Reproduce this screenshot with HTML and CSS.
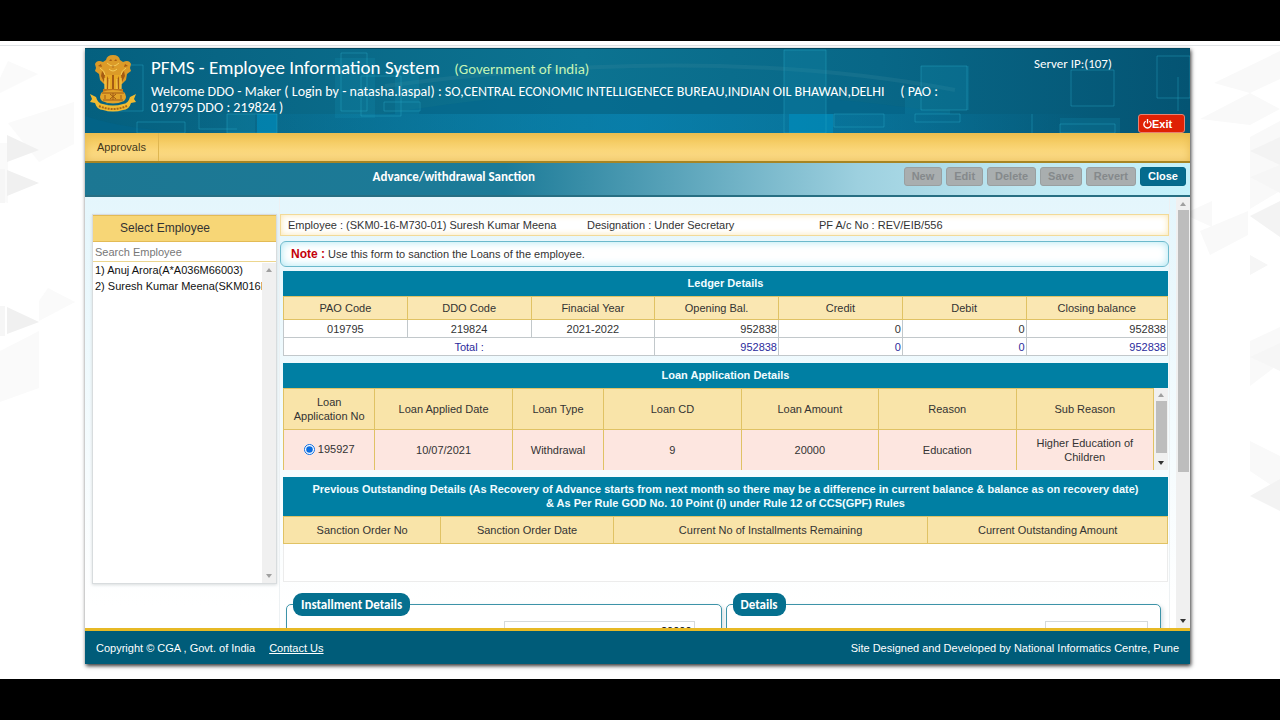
FILE: index.html
```html
<!DOCTYPE html>
<html lang="en">
<head>
<meta charset="utf-8">
<title>PFMS - Employee Information System</title>
<link rel="stylesheet" href="styles.css">
</head>
<body>
<div class="page">
  <svg class="page-art page-art-left" viewBox="0 0 85 638" preserveAspectRatio="xMinYMin meet" aria-hidden="true">
    <path fill="#fafafa" d="M0 37 8 20 38 33 0 52zM8 82 74 61 74 103 39 121zM0 102h8v60L0 160zM39 260 48 247 75 261 39 280zM0 310 39 290 39 347 0 361z"/>
    <path fill="#f0f0f0" d="M7 94 39 109 7 121zM7 129 39 142 7 155zM7 266 39 281 7 293z"/>
    <path fill="#f6f6f6" d="M0 265h5v30H0zM0 128h5v34H0z"/>
  </svg>
  <svg class="page-art page-art-right" viewBox="0 0 90 638" preserveAspectRatio="xMaxYMin meet" aria-hidden="true">
    <path fill="#f9f9f9" d="M24 42 90 10V38L60 52zM10 78 60 52 90 68 60 84zM60 96 90 80V150L60 168zM10 190 58 170 58 194 20 214zM0 170 22 160V186L0 176zM60 300 90 286V322L60 345zM60 400 90 415V450L60 430z"/>
    <path fill="#f3f3f3" d="M60 110 90 96V124zM60 175 90 160V196zM60 455 90 438V470z"/>
    <path fill="#f6f6f6" d="M60 136 90 124V152zM60 214 78 224 60 234zM60 316 90 302V330z"/>
  </svg>
  <div class="app">
    <header class="masthead">
      <svg class="masthead-art" viewBox="0 0 1105 85" preserveAspectRatio="none" aria-hidden="true">
        <defs>
          <linearGradient id="sea" x1="0" x2="1" y1="0" y2="0">
            <stop offset="0" stop-color="#04607f"/><stop offset=".12" stop-color="#086584"/>
            <stop offset=".45" stop-color="#0c7391"/><stop offset=".72" stop-color="#086787"/><stop offset="1" stop-color="#045473"/>
          </linearGradient>
          <linearGradient id="glow" x1="0" x2="1" y1="0" y2="0">
            <stop offset="0" stop-color="#0783b4" stop-opacity="0"/><stop offset=".5" stop-color="#0783b4" stop-opacity=".7"/><stop offset="1" stop-color="#0783b4" stop-opacity="0"/>
          </linearGradient>
        </defs>
        <path fill="url(#sea)" d="M0 0h1105v85H0z"/>
        <path fill="url(#glow)" d="M100 66h900v19H100z"/>
        <path fill="#02658e" fill-opacity=".5" d="M300 66Q560 20 870 66zM0 68Q60 88 150 82L0 85z"/>
        <path fill="none" stroke="#39879c" stroke-opacity=".25" stroke-width="4" d="M300 38Q620-5 870 42"/>
        <path fill="#008dbd" fill-opacity=".65" d="M172 66h20v19h-20zM704 66h44v19h-44z"/>
        <path fill="#1294b8" fill-opacity=".2" d="M250 10h40v60h-40zM310 18h24v48h-24zM699 2h42v64h-42zM820 40h45v26h-45zM142 66h28v19h-28zM836 18h48v44h-48zM975 70h60v15h-60z"/>
        <path fill="none" stroke="#2aa9ca" stroke-opacity=".4" d="M22 17h36v46H22zM52 74h48v11H52zM114 60v21h38M142 66h50v19h-50zM256 5h26v58h-26zM276 28h40v40h-40zM299 54h36v9h-36zM699 2h42v83h-42zM836 18h46v44h-46zM830 66h45v8h-45zM986 22h43v36h-43zM1072 8h33v42h-33zM1093 29v34M947 66v19M749 66h50v13h-50zM975 76h55v9h-55z"/>
        <path fill="none" stroke="#034961" d="M0 .5h1105"/>
      </svg>
      <svg class="emblem" viewBox="0 0 48 58" role="img" aria-label="State Emblem of India">
        <path fill="#dc9b28" d="M17 6Q18 1 24 1t7 5l3 2q6-3 8 2l-1 4 1 3-4 3-1 6-4 4H15l-4-4-1-6-4-3 1-3-1-4q2-5 8-2z"/>
        <path fill="#e8a925" d="M15 21h18l-1 16H16z"/>
        <path fill="#a55b13" d="M20 7l2-2 1 2zm5 0 2-2 1 2zm-3 4h4l-2 3zM9 12l3-2 1 3zm26 1 1-3 3 2zM13 17l3 4-1 7-3-6zm22 0-3 4 1 7 3-6zM18 22l2 4-1 10h-1zm12 0-2 4 1 10h1zM23 21h2v15h-2z"/>
        <path fill="none" stroke="#f5cc58" d="M18 9q6 6 12 0M20 15q4 4 8 0M11 14q5 3 5 7M37 14q-5 3-5 7M20 25v10M28 25v10M16 24v11M32 24v11"/>
        <path fill="#bd7419" d="M14 35h20v3H14z"/>
        <path fill="#e2a32a" d="M13 38q11-4 22 0 4 5 0 9-11 5-22 0-4-4 0-9z"/>
        <path fill="none" stroke="#9f5914" d="M13 39h22M14 46h20M24 39v7M21 40l6 5M27 40l-6 5M16 41v4M32 41v4"/>
        <path fill="#f0bb31" d="M1 40 7 43q2 7 7 7 10 3 20 0 5 0 7-7l6-3-2 5 2 3-5 1q-2 7-8 7-10 3-20 0-6 0-8-7l-5-1 2-3z"/>
        <path fill="none" stroke="#a96815" stroke-width="2" stroke-dasharray="2 1" d="M10 52q14 6 28 0"/>
      </svg>
      <div class="brand">
        <h1 class="brand-title">PFMS - Employee Information System <span class="brand-gov">(Government of India)</span></h1>
        <p class="welcome">Welcome DDO - Maker ( Login by - natasha.laspal) : SO,CENTRAL ECONOMIC INTELLIGENECE BUREAU,INDIAN OIL BHAWAN,DELHI &nbsp;&nbsp;&nbsp; ( PAO :<br>019795 DDO : 219824 )</p>
      </div>
      <div class="session">
        <span class="server">Server IP:(107)</span>
        <button class="exit" type="button"><svg class="power" viewBox="0 0 10 12" aria-hidden="true"><path fill="none" stroke="#fff" stroke-width="1.5" d="M3 3.5a4 4 0 1 0 4 0M5 1v5"/></svg>Exit</button>
      </div>
    </header>
    <nav class="menu"><a class="menu-link" href="#approvals">Approvals</a></nav>
    <div class="titlebar">
      <h2 class="titlebar-name">Advance/withdrawal Sanction</h2>
      <div class="actions">
        <button class="action" type="button" disabled>New</button>
        <button class="action" type="button" disabled>Edit</button>
        <button class="action" type="button" disabled>Delete</button>
        <button class="action" type="button" disabled>Save</button>
        <button class="action" type="button" disabled>Revert</button>
        <button class="action action-live" type="button">Close</button>
      </div>
    </div>
    <div class="workspace">
      <aside class="picker">
        <h3 class="picker-title">Select Employee</h3>
        <input class="picker-search" type="text" placeholder="Search Employee" aria-label="Search Employee">
        <div class="picker-body">
          <select class="picker-list" size="12" aria-label="Employees">
            <option>1) Anuj Arora(A*A036M66003)</option>
            <option>2) Suresh Kumar Meena(SKM016M73001)</option>
          </select>
          <div class="scroll" aria-hidden="true"><span class="arrow arrow-up"></span><span class="arrow arrow-down"></span></div>
        </div>
      </aside>
      <main class="detail">
        <div class="facts">
          <span>Employee : (SKM0-16-M730-01) Suresh Kumar Meena</span>
          <span>Designation : Under Secretary</span>
          <span>PF A/c No : REV/EIB/556</span>
        </div>
        <p class="note"><b class="note-label">Note :</b> Use this form to sanction the Loans of the employee.</p>
        <section class="block">
          <h3 class="block-title">Ledger Details</h3>
          <table class="grid ledger">
            <colgroup><col class="w14"><col class="w14"><col class="w14"><col class="w14"><col class="w14"><col class="w14"><col></colgroup>
            <thead><tr><th>PAO Code</th><th>DDO Code</th><th>Finacial Year</th><th>Opening Bal.</th><th>Credit</th><th>Debit</th><th>Closing balance</th></tr></thead>
            <tbody>
              <tr><td>019795</td><td>219824</td><td>2021-2022</td><td class="num">952838</td><td class="num">0</td><td class="num">0</td><td class="num">952838</td></tr>
              <tr class="total"><td colspan="3">Total :</td><td class="num">952838</td><td class="num">0</td><td class="num">0</td><td class="num">952838</td></tr>
            </tbody>
          </table>
        </section>
        <section class="block">
          <h3 class="block-title">Loan Application Details</h3>
          <div class="loan-wrap">
            <table class="grid loans">
              <colgroup><col class="w105"><col class="w158"><col class="w105"><col class="w158"><col class="w158"><col class="w158"><col></colgroup>
              <thead><tr><th>Loan Application No</th><th>Loan Applied Date</th><th>Loan Type</th><th>Loan CD</th><th>Loan Amount</th><th>Reason</th><th>Sub Reason</th></tr></thead>
              <tbody><tr><td><label class="pick"><input class="pick-radio" type="radio" name="loan" checked>195927</label></td><td>10/07/2021</td><td>Withdrawal</td><td>9</td><td>20000</td><td>Education</td><td>Higher Education of Children</td></tr></tbody>
            </table>
            <div class="scroll" aria-hidden="true"><span class="arrow arrow-up"></span><span class="thumb"></span><span class="arrow arrow-down arrow-on"></span></div>
          </div>
        </section>
        <section class="block">
          <h3 class="block-title">Previous Outstanding Details (As Recovery of Advance starts from next month so there may be a difference in current balance &amp; balance as on recovery date)<br>&amp; As Per Rule GOD No. 10 Point (i) under Rule 12 of CCS(GPF) Rules</h3>
          <div class="sanction-wrap">
            <table class="grid sanctions">
              <colgroup><col class="w178"><col class="w195"><col class="w356"><col></colgroup>
              <thead><tr><th>Sanction Order No</th><th>Sanction Order Date</th><th>Current No of Installments Remaining</th><th>Current Outstanding Amount</th></tr></thead>
            </table>
          </div>
        </section>
        <form class="forms">
          <fieldset class="panel"><legend class="panel-title">Installment Details</legend>
            <input class="field field-wide" type="text" value="20000" aria-label="Installment amount">
          </fieldset>
          <fieldset class="panel"><legend class="panel-title">Details</legend>
            <input class="field" type="text" aria-label="Detail">
          </fieldset>
        </form>
      </main>
      <div class="scroll scroll-page" aria-hidden="true"><span class="arrow arrow-up"></span><span class="thumb"></span><span class="arrow arrow-down arrow-on"></span></div>
    </div>
    <footer class="foot">
      <span>Copyright © CGA , Govt. of India</span>
      <a class="foot-link" href="#contact">Contact Us</a>
      <span class="foot-credit">Site Designed and Developed by National Informatics Centre, Pune</span>
    </footer>
  </div>
</div>
</body>
</html>
```
FILE: styles.css
```css
* { box-sizing: border-box; }
body {
  margin: 0;
  height: 100vh;
  padding: 41px 0;
  background: #000;
  color: #333;
  font: 11px/14px "Liberation Sans", Arial, sans-serif;
}
h1, h2, h3, p { margin: 0; }
button, input, select { font: inherit; }
.page {
  position: relative;
  height: 100%;
  padding: 7px 90px 15px 85px;
  background: linear-gradient(#fff 4px, #dfe3e6 4px, #dfe3e6 5px, #fff 5px);
}
.page-art { position: absolute; top: 0; height: 100%; }
.page-art-left { left: 0; width: 85px; }
.page-art-right { right: 0; width: 90px; }
.app {
  position: relative;
  display: flex;
  flex-direction: column;
  height: 100%;
  background: #fff;
  box-shadow: 1px 2px 4px #333;
}

.masthead {
  position: relative;
  display: flex;
  flex: none;
  height: 85px;
  padding-left: 4px;
  color: #fff;
  font-family: Calibri, Carlito, Lato, sans-serif;
}
.masthead-art { position: absolute; inset: 0; width: 100%; height: 100%; }
.emblem { position: relative; flex: none; width: 48px; height: 58px; margin-top: 6px; }
.brand { position: relative; flex: 1; padding: 8px 0 0 14px; }
.brand-title { font-size: 19px; line-height: 23px; font-weight: 500; }
.brand-gov { margin-left: 10px; color: #c5f5b5; font-size: 15px; font-weight: 400; }
.welcome { margin-top: 3px; font-size: 14px; line-height: 16px; white-space: nowrap; }
.session {
  position: relative;
  display: flex;
  flex-direction: column;
  justify-content: space-between;
  width: 151px;
  margin-right: 5px;
  padding-top: 9px;
}
.server { font-size: 13px; }
.exit {
  display: flex;
  align-items: center;
  align-self: flex-end;
  width: 47px;
  height: 19px;
  padding: 0 4px;
  border: 1px solid #e58373;
  border-radius: 3px;
  background: #df2105;
  color: #fff;
  font: bold 11px "Liberation Sans", Arial, sans-serif;
}
.power { flex: none; width: 9px; height: 11px; }

.menu {
  display: flex;
  flex: none;
  height: 30px;
  border-bottom: 2px solid #a68524;
  background: linear-gradient(#f0c24f, #fad679 60%, #fcdc8c);
  box-shadow: inset 0 0 8px #e5b950;
}
.menu-link {
  padding: 7px 12px 0;
  border-right: 1px solid #dfb650;
  color: #443719;
  text-decoration: none;
}
.titlebar {
  display: flex;
  flex: none;
  align-items: flex-start;
  height: 34px;
  padding: 4px 4px 0 0;
  border-bottom: 2px solid #276f83;
  background: linear-gradient(90deg, #1c7793, #1c7b98 38%, #5ca5bb 54%, #9dd0df 70%, #bfe8f2 85%, #c5f2fb);
}
.titlebar-name {
  width: 67%;
  color: #fff;
  font: bold 13px/20px Calibri, Carlito, Lato, sans-serif;
  text-align: center;
}
.actions { display: flex; gap: 4px; margin-left: auto; }
.action {
  height: 19px;
  padding: 0 7px;
  border: 1px solid #999fa0;
  border-radius: 3px;
  background: #a9aeaf;
  color: #85898b;
  font-weight: bold;
  line-height: 17px;
}
.action-live { border-color: #056787; background: #056b8e; color: #fff; }

.workspace {
  display: flex;
  flex: 1;
  min-height: 0;
  padding-left: 7px;
  overflow: hidden;
  background: linear-gradient(#e4f6fc, #fff 95%);
}
.picker {
  display: flex;
  flex: none;
  flex-direction: column;
  width: 185px;
  margin: 17px 2px 44px 0;
  border: 1px solid #d8dcde;
  background: #fff;
  box-shadow: 0 1px 3px #d8dcde;
}
.picker-title {
  height: 27px;
  padding-left: 27px;
  border: solid #e3bb55;
  border-width: 1px 0;
  background: #f7d676;
  color: #333;
  font-size: 12px;
  font-weight: 400;
  line-height: 24px;
}
.picker-search {
  width: 100%;
  height: 20px;
  padding: 0 2px;
  border: 0;
  border-bottom: 1px solid #ecd68f;
}
.picker-search::placeholder { color: #777; }
.picker-body { display: flex; flex: 1; min-height: 0; padding-top: 1px; }
.picker-list {
  flex: 1;
  min-width: 0;
  height: 100%;
  padding: 0;
  border: 0;
  background: #fff;
  color: #111;
  overflow: hidden;
}
.picker-list option { min-height: 16px; padding: 1px 2px; line-height: 14px; }

.scroll {
  display: flex;
  flex: none;
  flex-direction: column;
  align-items: center;
  justify-content: space-between;
  width: 14px;
  padding: 5px 0;
  background: #f0f0f0;
}
.arrow { border: solid transparent; border-width: 0 3px; }
.arrow-up { border-bottom: 4px solid #a0a0a0; }
.arrow-down { border-top: 4px solid #a0a0a0; }
.arrow-on { border-top-color: #333; }
.thumb { flex: none; width: 11px; height: 52px; margin-bottom: auto; margin-top: 4px; background: #bdbdbd; }

.detail {
  flex: 1;
  min-width: 0;
  height: 100%;
  margin-right: 6px;
  padding: 17px 0 0;
  overflow: hidden;
  border: solid #edf1f3;
  border-width: 0 1px;
}
.facts {
  display: grid;
  grid-template-columns: 299px 232px 1fr;
  height: 22px;
  padding: 0 7px;
  border: 1px solid #f2da98;
  background: #fff;
  box-shadow: inset 0 0 6px #fae5b0;
  line-height: 20px;
  color: #333;
}
.note {
  height: 26px;
  margin: 5px 0 4px;
  padding: 0 10px;
  border: 1px solid #6bb9cc;
  border-radius: 6px;
  background: #fff;
  box-shadow: inset 0 0 8px #a9e5f2;
  line-height: 24px;
}
.note-label { color: #c4000a; font-size: 12px; }
.block { margin: 0 1px 7px 3px; }
.block-title {
  padding: 5px 5px 6px;
  background: #007fa3;
  color: #f2fcff;
  font-size: 11px;
  font-weight: bold;
  line-height: 14px;
  text-align: center;
}
.grid { width: 100%; border-collapse: collapse; table-layout: fixed; }
.grid th, .grid td { padding: 0 2px; border: 1px solid #c2c8cb; font-weight: 400; text-align: center; }
.grid th { border-color: #e0c264; background: #fae7b2; }
.grid .num { text-align: right; padding-right: 1px; }
.grid .total td { color: #2b2b9c; }
.w14 { width: 14%; }
.w105 { width: 10.5%; }
.w158 { width: 15.8%; }
.w178 { width: 17.8%; }
.w195 { width: 19.5%; }
.w356 { width: 35.6%; }
.ledger th { height: 23px; }
.ledger td { height: 18px; }
.ledger tbody td { background: #fff; }
.loan-wrap { display: flex; height: 82px; overflow: hidden; }
.loans { flex: 1; height: 83px; }
.loans th, .sanctions th { background: #f9e4a9; }
.loans th { height: 41px; padding: 0 6px; }
.loans td { height: 41px; padding: 0 6px; border-color: #e0c264; background: #fde6e0; }
.pick { display: inline-flex; align-items: center; gap: 3px; }
.pick-radio { width: 11px; height: 11px; margin: 0; accent-color: #0a6ce0; }
.sanction-wrap {
  height: 66px;
  background: #fff;
  box-shadow: inset 0 0 0 1px #ececec;
}
.sanctions th { height: 27px; }
.forms { display: flex; gap: 4px; margin: 11px 8px 0 6px; }
.panel {
  flex: 1;
  min-width: 0;
  margin: 0;
  height: 120px;
  padding: 5px 26px 5px 6px;
  border: 1px solid #3d93a8;
  border-radius: 5px;
  box-shadow: 2px 2px 4px #d5dfe3;
  text-align: right;
}
.panel-title {
  padding: 0 8px;
  border-radius: 9px;
  background: #05708f;
  color: #fff;
  font: bold 13px/23px Calibri, Carlito, Lato, sans-serif;
  text-align: left;
}
.field { width: 103px; height: 20px; margin-right: -14px; border: 1px solid #d5d9db; background: #fff; text-align: right; }
.field-wide { width: 191px; margin-right: 0; }
.scroll-page .thumb { height: 262px; }

.foot {
  display: flex;
  flex: none;
  align-items: center;
  height: 36px;
  padding: 0 11px;
  border-top: 3px solid #e7b925;
  background: #005c79;
  color: #fff;
}
.foot-link { margin-left: 14px; color: #fff; }
.foot-credit { margin-left: auto; }
```
